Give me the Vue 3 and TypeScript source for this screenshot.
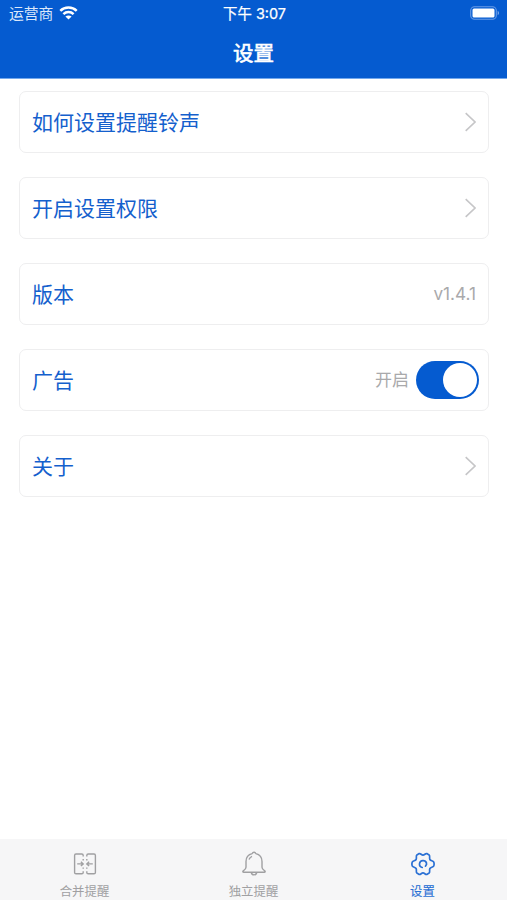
<script setup lang="ts">
import { ref } from 'vue'

interface SettingRow {
  id: string
  label: string
  kind: 'link' | 'value' | 'switch'
  value?: string
}

const rows: SettingRow[] = [
  { id: 'ringtone', label: '如何设置提醒铃声', kind: 'link' },
  { id: 'permission', label: '开启设置权限', kind: 'link' },
  { id: 'version', label: '版本', kind: 'value', value: 'v1.4.1' },
  { id: 'ads', label: '广告', kind: 'switch' },
  { id: 'about', label: '关于', kind: 'link' },
]

const adsOn = ref(true)
const activeTab = ref('settings')
</script>

<template>
  <div class="screen">
    <header class="header">
      <div class="status">
        <div class="carrier">
          <span class="operator">运营商</span>
          <svg class="wifi" viewBox="0 0 18 14" fill="none" stroke="#fff" stroke-width="2.5">
            <path d="M.8 4.8C5.2.4 12.8.4 17.2 4.8" />
            <path d="M3.9 8.1c2.9-2.8 7.3-2.8 10.2 0" />
            <path d="M9 13.6 5.9 10.6c1.8-1.6 4.4-1.6 6.2 0z" fill="#fff" stroke="none" />
          </svg>
        </div>
        <span class="time">下午 3:07</span>
        <div class="power">
          <svg class="battery" viewBox="0 0 30 14">
            <rect x=".7" y=".7" width="25.6" height="12.6" rx="3.8" fill="none" stroke="#6a9ce6" stroke-width="1.1" />
            <rect x="2.5" y="2.4" width="22" height="9.2" rx="1.5" fill="#fff" />
            <path d="M27.7 4.8c1.8.8 1.8 3.6 0 4.4z" fill="#7faaea" />
          </svg>
        </div>
      </div>
      <h1 class="title">设置</h1>
    </header>

    <main class="list">
      <section v-for="row in rows" :key="row.id" class="card">
        <span class="label">{{ row.label }}</span>
        <svg v-if="row.kind === 'link'" class="chevron" viewBox="0 0 12 20" fill="none" stroke="#c6c6c8" stroke-width="1.6">
          <path d="M1.7 1.2 11 10l-9.3 8.8" />
        </svg>
        <span v-else-if="row.kind === 'value'" class="value version">{{ row.value }}</span>
        <div v-else class="toggle">
          <span class="value">{{ adsOn ? '开启' : '关闭' }}</span>
          <button class="switch" :class="{ on: adsOn }" role="switch" :aria-checked="adsOn" @click="adsOn = !adsOn">
            <span class="knob"></span>
          </button>
        </div>
      </section>
    </main>

    <nav class="tabs">
      <button class="tab" :class="{ active: activeTab === 'merge' }" @click="activeTab = 'merge'">
        <svg class="icon" viewBox="0 0 26 26" fill="none" stroke="currentColor" stroke-width="1.4">
          <path d="M11.2 5.4V4.4Q11.2 3 9.8 3H4Q2.6 3 2.6 4.4V21.4Q2.6 22.8 4 22.8H9.8Q11.2 22.8 11.2 21.4V20.2M11.2 8v1.4M11.2 16.4v1.4" />
          <path d="M14.8 5.4V4.4Q14.8 3 16.2 3H22Q23.4 3 23.4 4.4V21.4Q23.4 22.8 22 22.8H16.2Q14.8 22.8 14.8 21.4V20.2M14.8 8v1.4M14.8 16.4v1.4" />
          <path d="M5.2 12.9h6M8.9 10.8l2.3 2.1L8.9 15M20.8 12.9h-6M17.1 10.8l-2.3 2.1L17.1 15" />
        </svg>
        <span>合并提醒</span>
      </button>
      <button class="tab" :class="{ active: activeTab === 'single' }" @click="activeTab = 'single'">
        <svg class="icon" viewBox="0 0 26 26" fill="none" stroke="currentColor" stroke-width="1.4" stroke-linejoin="round">
          <path d="M11.2 2.6a1.9 1.9 0 0 1 3.6 0C18.6 3.4 21 6.6 21 10.6v5.6c0 1.6 1.1 2.6 2.7 3.6.8.5.5 1.5-.4 1.5H2.7c-.9 0-1.2-1-.4-1.5C3.9 18.8 5 17.8 5 16.2v-5.6c0-4 2.4-7.2 6.2-8z" />
          <path d="M10.3 21.4c.2 3.3 5.2 3.3 5.4 0M8 8.4c.6-1.5 1.6-2.5 3-3.1" />
        </svg>
        <span>独立提醒</span>
      </button>
      <button class="tab" :class="{ active: activeTab === 'settings' }" @click="activeTab = 'settings'">
        <svg class="icon" viewBox="0 0 26 26" fill="none" stroke="currentColor" stroke-width="1.7" stroke-linejoin="round" stroke-linecap="round">
          <path d="M9.2 2.6C10.7 2.1 11.3 4.1 13 4.1S15.3 2.1 16.8 2.6L19.1 3.9C20.4 5 19 6.9 19.9 8.5S22.9 9.4 23.8 11.1Q24.5 13 23.8 14.9C22.9 16.6 20.8 15.9 19.9 17.5S20.4 21 19.1 22.1L16.8 23.4C15.3 23.9 14.7 21.9 13 21.9S10.7 23.9 9.2 23.4L6.9 22.1C5.6 21 7 19.1 6.1 17.5S3.1 16.6 2.2 14.9Q1.5 13 2.2 11.1C3.1 9.4 5.2 10.1 6.1 8.5S5.6 5 6.9 3.9Z" />
          <path d="M12.2 16.5A3.5 3.5 0 1 1 16.5 13.4L15.5 15.2" />
        </svg>
        <span>设置</span>
      </button>
    </nav>
  </div>
</template>

<style>
body {
  margin: 0;
  background: #fff;
}
</style>

<style scoped>
.screen {
  display: flex;
  flex-direction: column;
  height: 100vh;
  overflow: hidden;
  background: #fff;
  font-family: Inter, "Noto Sans CJK SC", sans-serif;
}
.header {
  flex: none;
  box-sizing: border-box;
  height: 79px;
  background: #055bd0;
  border-bottom: 1px solid #73a8ed;
  color: #fff;
}
.status {
  display: grid;
  grid-template-columns: 1fr auto 1fr;
  align-items: center;
  height: 27px;
  padding: 0 7px 0 9px;
  font-size: 14.8px;
  line-height: 27px;
}
.carrier {
  display: flex;
  align-items: center;
  gap: 5.5px;
  height: 27px;
  color: #dce8fa;
}
.operator {
  padding-top: 2px;
}
.wifi {
  width: 19px;
  height: 14px;
  margin-bottom: 1px;
}
.time {
  font-size: 14.4px;
  -webkit-text-stroke: 0.25px currentColor;
}
.power {
  display: flex;
  justify-content: flex-end;
}
.battery {
  width: 30px;
  height: 14px;
  margin-bottom: 1px;
}
.title {
  margin: 0;
  height: 51px;
  font-size: 20.5px;
  font-weight: 400;
  line-height: 53px;
  text-align: center;
  -webkit-text-stroke: 0.6px currentColor;
}
.list {
  flex: 1;
  display: flex;
  flex-direction: column;
  gap: 23.9px;
  padding: 12px 18px 0 19px;
}
.card {
  display: flex;
  align-items: center;
  justify-content: space-between;
  box-sizing: border-box;
  height: 62px;
  padding: 0 12px;
  border: 1px solid #eeeeef;
  border-radius: 7px;
}
.label {
  padding-top: 2px;
  color: #1460cd;
  font-size: 21px;
  line-height: 30px;
}
.chevron {
  width: 12px;
  height: 20px;
}
.value {
  padding-top: 1px;
  color: #a9a9ab;
  font-size: 17px;
  line-height: 24px;
}
.version {
  padding-top: 0;
  font-size: 17.2px;
}
.toggle {
  display: flex;
  align-items: center;
  gap: 7px;
  margin-right: -3px;
}
.switch {
  display: flex;
  box-sizing: border-box;
  width: 63px;
  height: 38px;
  padding: 2px;
  border: 0;
  border-radius: 19px;
  background: #d8d8da;
}
.switch.on {
  justify-content: flex-end;
  background: #055bd0;
}
.knob {
  width: 34px;
  height: 34px;
  border-radius: 50%;
  background: #fff;
}
.tabs {
  flex: none;
  display: grid;
  grid-template-columns: repeat(3, 1fr);
  height: 61px;
  background: #f6f6f7;
}
.tab {
  display: flex;
  flex-direction: column;
  align-items: center;
  gap: 6px;
  padding: 12px 0 0;
  border: 0;
  background: none;
  color: #a0a0a2;
  font: 12.4px/18px Inter, "Noto Sans CJK SC", sans-serif;
}
.tab.active {
  color: #2a70d4;
}
.tab.active span {
  -webkit-text-stroke: 0.15px currentColor;
}
.icon {
  width: 26px;
  height: 26px;
}
</style>
